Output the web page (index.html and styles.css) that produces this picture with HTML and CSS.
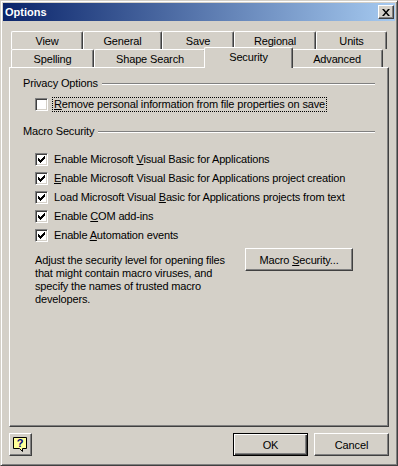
FILE: index.html
```html
<!DOCTYPE html>
<html lang="en">
  <head>
    <meta charset="UTF-8" />
    <title>Options</title>
    <link rel="stylesheet" href="styles.css">
  </head>
  <body>
    <div class="window">
      <div class="titlebar">
        <span class="title">Options</span>
        <button class="close" type="button">
          <svg width="8" height="7" viewBox="0 0 8 7">
            <path d="M0 0h2l2 2.5l2-2.5h2l-3 3.5l3 3.5h-2l-2-2.5l-2 2.5h-2l3-3.5z" fill="#000" />
          </svg>
        </button>
      </div>

      <div class="content">
        <div class="tabs">
          <div class="tab-row">
            <div class="tab w-view">View</div>
            <div class="tab w-general">General</div>
            <div class="tab w-save">Save</div>
            <div class="tab w-regional">Regional</div>
            <div class="tab w-units">Units</div>
          </div>
          <div class="tab-row">
            <div class="tab w-spelling">Spelling</div>
            <div class="tab w-shape">Shape Search</div>
            <div class="tab selected w-security">Security</div>
            <div class="tab w-advanced">Advanced</div>
          </div>
        </div>

        <div class="panel">
          <div class="group-title">
            <span>Privacy Options</span>
            <span class="rule"></span>
          </div>
          <div class="check first focused">
            <span class="box"></span>
            <span class="text"><u>R</u>emove personal information from file properties on save</span>
          </div>

          <div class="group-title macro">
            <span>Macro Security</span>
            <span class="rule"></span>
          </div>
          <div class="check-list">
            <div class="check">
              <span class="box checked"></span>
              <span class="text">Enable Microsoft <u>V</u>isual Basic for Applications</span>
            </div>
            <div class="check">
              <span class="box checked"></span>
              <span class="text"><u>E</u>nable Microsoft Visual Basic for Applications project creation</span>
            </div>
            <div class="check">
              <span class="box checked"></span>
              <span class="text">Load Microsoft Visual <u>B</u>asic for Applications projects from text</span>
            </div>
            <div class="check">
              <span class="box checked"></span>
              <span class="text">Enable <u>C</u>OM add-ins</span>
            </div>
            <div class="check">
              <span class="box checked"></span>
              <span class="text">Enable <u>A</u>utomation events</span>
            </div>
          </div>

          <div class="macro-row">
            <p class="note">
              Adjust the security level for opening files<br>
              that might contain macro viruses, and<br>
              specify the names of trusted macro<br>
              developers.
            </p>
            <button class="btn macro-btn" type="button">Macro <u>S</u>ecurity...</button>
          </div>
        </div>

        <div class="footer">
          <button class="btn help" type="button">
            <svg width="15" height="17" viewBox="0 0 15 17">
              <path d="M0.5 0.5h13v11h-4v3l-3-3h-6z" fill="#ffff99" stroke="#000" />
              <text x="7" y="10" text-anchor="middle" class="qmark">?</text>
            </svg>
          </button>
          <span class="spacer"></span>
          <button class="btn default" type="button">OK</button>
          <button class="btn" type="button">Cancel</button>
        </div>
      </div>
    </div>
  </body>
</html>
```

FILE: styles.css
```css
* {
  margin: 0;
  padding: 0;
  box-sizing: border-box;
}
body {
  font-family: "Liberation Sans", Arial, sans-serif;
  font-size: 11px;
  letter-spacing: -0.15px;
  color: #000;
  background-color: #d4d0c8;
}
.window {
  width: 398px;
  height: 466px;
  display: flex;
  flex-direction: column;
  background-color: #d4d0c8;
  border: 1px solid;
  border-color: #d4d0c8 #404040 #404040 #d4d0c8;
  box-shadow: inset 1px 1px #fff, inset -1px -1px #808080;
  padding: 2px;
}
.titlebar {
  height: 18px;
  display: flex;
  align-items: center;
  justify-content: space-between;
  background: linear-gradient(to right, #0a246a, #a6caf0);
  padding: 0 2px 0 2px;
}
.title {
  color: #fff;
  font-weight: bold;
  letter-spacing: 0;
}
.close {
  width: 16px;
  height: 14px;
  display: flex;
  align-items: center;
  justify-content: center;
  background-color: #d4d0c8;
  border: 1px solid;
  border-color: #fff #404040 #404040 #fff;
  box-shadow: inset -1px -1px #808080;
  margin-right: -1px;
}
.content {
  flex: 1;
  display: flex;
  flex-direction: column;
  padding: 10px 6px 7px 6px;
}
.tabs {
  padding: 0 2px;
}
.tab-row {
  display: flex;
  height: 18px;
}
.tab {
  height: 18px;
  display: flex;
  align-items: center;
  justify-content: center;
  border-top: 1px solid #fff;
  border-left: 1px solid #fff;
  border-right: 1px solid #404040;
  border-radius: 2px 2px 0 0;
  box-shadow: inset -1px 0 #808080;
  padding-top: 1px;
}
.tab.selected {
  position: relative;
  z-index: 1;
  height: 21px;
  margin: -2px -2px -1px -2px;
  background-color: #d4d0c8;
  padding-top: 0;
  padding-bottom: 3px;
}
.w-view { width: 72px; }
.w-general { width: 79px; }
.w-save { width: 72px; }
.w-regional { width: 82px; }
.w-units { width: 71px; }
.w-spelling { width: 83px; }
.w-shape { width: 112px; }
.w-security { width: 89px; }
.w-advanced { width: 92px; }

.panel {
  height: 360px;
  border: 1px solid;
  border-color: #fff #404040 #404040 #fff;
  box-shadow: inset -1px -1px #808080;
  padding: 9px 13px 0 13px;
}
.group-title {
  display: flex;
  align-items: center;
  height: 13px;
  line-height: 13px;
}
.group-title.macro {
  margin-top: 13px;
}
.rule {
  flex: 1;
  height: 2px;
  margin-left: 4px;
  border-top: 1px solid #808080;
  border-bottom: 1px solid #fff;
}
.check {
  display: flex;
  align-items: center;
  height: 15px;
  margin-left: 12px;
}
.check.first {
  margin-top: 7px;
}
.check-list {
  display: flex;
  flex-direction: column;
  gap: 4px;
  margin-top: 14px;
}
.box {
  width: 13px;
  height: 13px;
  background-color: #fff;
  border: 1px solid;
  border-color: #808080 #fff #fff #808080;
  box-shadow: inset 1px 1px #404040, inset -1px -1px #d4d0c8;
  margin-right: 4px;
}
.box.checked {
  background-image: url("data:image/svg+xml,%3Csvg xmlns='http://www.w3.org/2000/svg' width='11' height='11'%3E%3Cpath d='M2 4h1v1h1v1h1v-1h1v-1h1v-1h1v-1h1v3h-1v1h-1v1h-1v1h-1v1h-1v-1h-1v-1h-1z' fill='%23000'/%3E%3C/svg%3E");
  background-repeat: no-repeat;
}
.text {
  line-height: 13px;
  padding: 0 1px;
  border: 1px solid transparent;
}
.focused .text {
  border: 1px dotted #000;
}
.macro-row {
  display: flex;
  align-items: flex-start;
  margin-top: 5px;
  padding-left: 12px;
}
.note {
  width: 210px;
  line-height: 13px;
  margin-top: 6px;
}
.btn {
  font-family: inherit;
  font-size: 11px;
  letter-spacing: -0.15px;
  color: #000;
  background-color: #d4d0c8;
  height: 23px;
  width: 75px;
  border: 1px solid;
  border-color: #fff #404040 #404040 #fff;
  box-shadow: inset -1px -1px #808080;
}
.macro-btn {
  width: 108px;
}
.footer {
  display: flex;
  gap: 6px;
  margin-top: 6px;
}
.spacer {
  flex: 1;
}
.help {
  width: 23px;
  display: flex;
  align-items: center;
  justify-content: center;
  padding-top: 2px;
}
.qmark {
  font-family: "Liberation Sans", Arial, sans-serif;
  font-size: 11px;
  font-weight: bold;
  fill: #000080;
}
.default {
  border: 1px solid #000;
  box-shadow: inset 1px 1px #fff, inset -1px -1px #404040, inset -2px -2px #808080;
}
```
